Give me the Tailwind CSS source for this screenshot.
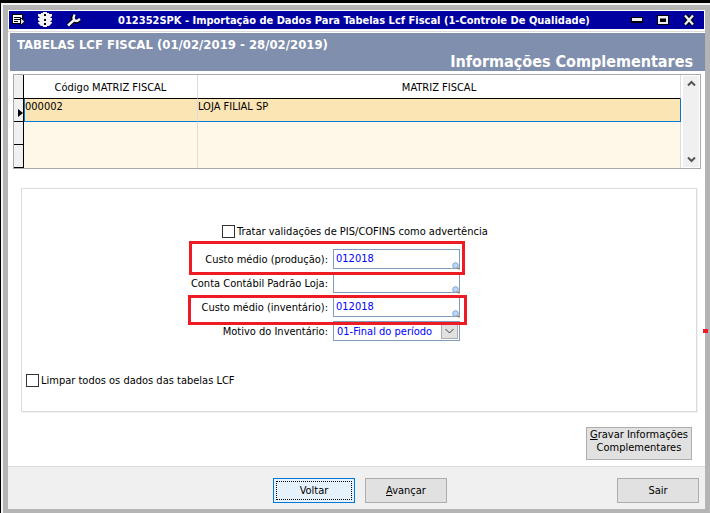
<!DOCTYPE html>
<html lang="pt-BR">
<head>
<meta charset="utf-8">
<meta name="viewport" content="width=device-width, initial-scale=1">
<title>Importação de Dados Para Tabelas Lcf Fiscal</title>
<script src="https://cdn.jsdelivr.net/npm/@tailwindcss/browser@4"></script>
</head>
<body class="bg-[#b4b4b4] font-['Tahoma','DejaVu_Sans_Condensed','Noto_Sans',sans-serif] text-[11px] leading-[13px] text-black">
<div class="relative flex min-h-screen flex-col border-t-3 border-l border-black">
  <div class="flex flex-1 flex-col border-t-2 border-l-2 border-[#f4f4f4]">
  <div class="flex flex-1 flex-col border-x-5 border-t-5 border-b-4 border-[#b4b4b4] bg-white">

    <header class="mt-px ml-px mr-px flex h-[18px] items-center bg-[#0000a0] text-white">
      <div class="flex w-[72px] shrink-0 items-center pl-[3px]">
        <button aria-label="Executar" class="block"><svg width="14" height="14" viewBox="0 0 14 14"><path d="M0 1h11v10H0z" fill="#000"/><path d="M1 2h9v8H1z" fill="#fff"/><path d="M2 4.500h6M2 6.500h6M2 8.500h4" stroke="#000"/><path d="M8.500 4.500v8l4.500-4z" fill="#ddd" stroke="#000"/></svg></button>
        <button aria-label="Semáforo" class="ml-3 block"><svg width="14" height="18" viewBox="0 0 14 18"><path d="M5 1h4v1h2v1h3v2l-2 2h2v2l-2 2h2v1l-3 3H9v1H5v-1H3l-3-3v-1h2L0 9V7h2L0 5V3h3V2h2z" fill="#f4f4f4"/><path d="M6 3h2v2H6zM6 8h2v2H6zM6 12h2v2H6z" fill="#000"/></svg></button>
        <button aria-label="Ferramentas" class="ml-3.5 block"><svg width="15" height="15" viewBox="0 0 15 15"><path d="M2.500 12 8 7M8.500 2 7 5l1 3 3 .5L14 7" fill="none" stroke="#000" stroke-width="4.400"/><path d="M2 12.500 8 7M8.500 1.500 7.500 5l1 2.500 2.500.5 3-2" fill="none" stroke="#f4f4f4" stroke-width="2.400"/></svg></button>
      </div>
      <h1 class="flex-1 text-center text-[11px] font-bold whitespace-nowrap">012352SPK - Importação de Dados Para Tabelas Lcf Fiscal (1-Controle De Qualidade)</h1>
      <div class="flex w-[77px] shrink-0 items-center gap-3.5 pl-1">
        <button aria-label="Minimizar"><svg class="block" width="12" height="12" viewBox="0 0 12 12"><path d="M0 3h12v6H0z" fill="#000"/><path d="M1 4h10v3H1z" fill="#eee"/></svg></button>
        <button aria-label="Maximizar"><svg class="block" width="12" height="12" viewBox="0 0 12 12"><path d="M0 1h12v10H0z" fill="#000"/><path d="M1 2h10v8H1zM3 4.500v3.500h6V4.500z" fill="#eee" fill-rule="evenodd"/></svg></button>
        <button aria-label="Fechar"><svg class="block" width="12" height="12" viewBox="0 0 12 12"><path d="m2 1.500 8 9M10 1.500l-8 9" stroke="#000" stroke-width="4.500"/><path d="m2 1.500 8 9M10 1.500l-8 9" stroke="#eee" stroke-width="2.400"/></svg></button>
      </div>
    </header>

    <div class="mt-0.5 border-t border-[#dcdcdc]"></div>

    <section class="mt-px ml-0.5 flex h-[38px] flex-col justify-between bg-[#808fad] pt-1 pr-3 pl-[7px] font-bold text-white">
      <p class="text-[13px] leading-4">TABELAS LCF FISCAL (01/02/2019 - 28/02/2019)</p>
      <h2 class="text-right text-[16px] leading-[18px]">Informações Complementares</h2>
    </section>

    <main class="flex flex-1 flex-col">
      <div class="mt-[3px] mr-1 ml-[5px] flex border border-[#a9a9a9]">
        <table class="flex-1 table-fixed border-separate border-spacing-0">
          <colgroup><col class="w-2.5"><col class="w-[174px]"><col></colgroup>
          <thead>
            <tr class="h-6">
              <td class="border-r border-b border-black bg-[#f0f0f0] p-0"></td>
              <th scope="col" class="border-r border-b border-r-[#dcdcdc] border-b-black p-0 pt-px font-normal">Código MATRIZ FISCAL</th>
              <th scope="col" class="border-r border-b border-r-[#dcdcdc] border-b-black p-0 pt-px font-normal">MATRIZ FISCAL</th>
            </tr>
          </thead>
          <tbody class="bg-[#fff8e8]">
            <tr class="h-[23px] bg-[#fce5b4]">
              <td class="border-r border-b border-black bg-[#f0f0f0] p-0 align-bottom"><svg class="mb-1 ml-1" width="5" height="8" viewBox="0 0 5 8"><path d="M0 0v8l5-4z"/></svg></td>
              <td class="border-r border-b border-l border-r-[#dcdcdc] border-b-[#0078d7] border-l-[#0078d7] p-0 pt-px align-top">000002</td>
              <td class="border-r border-b border-[#0078d7] p-0 pt-px align-top">LOJA FILIAL SP</td>
            </tr>
            <tr class="h-[23px]">
              <td class="border-r border-b border-black bg-[#f0f0f0] p-0"></td>
              <td class="border-r border-[#dcdcdc] p-0"></td>
              <td class="border-r border-[#dcdcdc] p-0"></td>
            </tr>
            <tr class="h-[23px]">
              <td class="border-r border-b border-black bg-[#f0f0f0] p-0"></td>
              <td class="border-r border-[#dcdcdc] p-0"></td>
              <td class="border-r border-[#dcdcdc] p-0"></td>
            </tr>
          </tbody>
        </table>
        <div class="my-px mr-px ml-0.5 flex w-4 flex-col items-center justify-between bg-[#f0f0f0] py-1">
          <button aria-label="Rolar para cima"><svg class="block" width="9" height="7" viewBox="0 0 9 7"><path d="M1 5.500 4.500 2 8 5.500" fill="none" stroke="#555" stroke-width="2"/></svg></button>
          <button aria-label="Rolar para baixo"><svg class="block" width="9" height="7" viewBox="0 0 9 7"><path d="M1 1.500 4.500 5 8 1.500" fill="none" stroke="#555" stroke-width="2"/></svg></button>
        </div>
      </div>

      <form class="mt-[19px] mr-2 ml-[13px] border border-[#dcdcdc] pt-9 pb-6 shadow-[1px_1px_0_#f0f0f0]">
        <label class="ml-[200px] flex items-center gap-0.5"><input type="checkbox" class="size-[13px] appearance-none border border-[#333] bg-white">Tratar validações de PIS/COFINS como advertência</label>
        <div class="relative mt-[11px] ml-[166px] grid w-[272px] grid-cols-[140px_127px] items-center gap-x-[5px] gap-y-1">
          <label for="prod" class="text-right">Custo médio (produção):</label>
          <div class="relative"><input id="prod" value="012018" class="block h-5 w-full border border-[#7f9db9] pb-0.5 pl-0.5 text-[#0000ff]">
            <svg class="absolute right-0 -bottom-px" width="8" height="8" viewBox="0 0 8 8"><path d="m5 5 2.500 2.500" stroke="#b97a3c" stroke-width="1.500"/><circle cx="3.500" cy="3.500" r="2.800" fill="#bcd8f4" stroke="#7fa4cf"/></svg></div>
          <label for="conta" class="text-right whitespace-nowrap">Conta Contábil Padrão Loja:</label>
          <div class="relative"><input id="conta" value="" class="block h-5 w-full border border-[#7f9db9] pb-0.5 pl-0.5 text-[#0000ff]">
            <svg class="absolute right-0 -bottom-px" width="8" height="8" viewBox="0 0 8 8"><path d="m5 5 2.500 2.500" stroke="#b97a3c" stroke-width="1.500"/><circle cx="3.500" cy="3.500" r="2.800" fill="#bcd8f4" stroke="#7fa4cf"/></svg></div>
          <label for="inv" class="text-right">Custo médio (inventário):</label>
          <div class="relative"><input id="inv" value="012018" class="block h-5 w-full border border-[#7f9db9] pb-0.5 pl-0.5 text-[#0000ff]">
            <svg class="absolute right-0 -bottom-px" width="8" height="8" viewBox="0 0 8 8"><path d="m5 5 2.500 2.500" stroke="#b97a3c" stroke-width="1.500"/><circle cx="3.500" cy="3.500" r="2.800" fill="#bcd8f4" stroke="#7fa4cf"/></svg></div>
          <label for="motivo" class="text-right">Motivo do Inventário:</label>
          <div class="relative"><select id="motivo" class="block h-5 w-full appearance-none border border-[#7f9db9] pl-[3px] text-[#0000ff]"><option>01-Final do período</option></select>
            <span class="pointer-events-none absolute top-0.5 right-0.5 flex h-4 w-[17px] items-center justify-center border border-[#adadad] bg-[#e1e1e1]"><svg width="9" height="6" viewBox="0 0 9 6"><path d="m.5 1 4 4 4-4" fill="none" stroke="#444"/></svg></span></div>
          <div class="pointer-events-none absolute -top-2 left-px h-[34px] w-[276px] border-3 border-[#ed1c24]"></div>
          <div class="pointer-events-none absolute top-[46px] left-0 h-[30px] w-[279px] border-3 border-[#ed1c24]"></div>
        </div>
        <label class="mt-[33px] ml-1 flex items-center gap-0.5"><input type="checkbox" class="size-[13px] appearance-none border border-[#333] bg-white">Limpar todos os dados das tabelas LCF</label>
      </form>

      <div class="mt-[15px] mr-[13px] flex justify-end">
        <button class="h-[33px] w-[106px] border border-[#adadad] bg-[#e1e1e1] pb-[5px] whitespace-nowrap"><u>G</u>ravar Informações<br>Complementares</button>
      </div>
    </main>

    <footer class="flex h-[43px] items-start gap-2.5 border-t border-[#dcdcdc] bg-[#f0f0f0] pt-[11px] pr-1.5 pl-[265px]">
      <button class="h-[25px] w-[82px] border border-[#0078d7] bg-[#e5f1fb] p-0.5"><span class="flex h-full items-center justify-center border border-dotted border-black">Voltar</span></button>
      <button class="h-[25px] w-[82px] border border-[#adadad] bg-[#e1e1e1]"><u>A</u>vançar</button>
      <button class="ml-auto h-[25px] w-[82px] border border-[#adadad] bg-[#e1e1e1]">Sair</button>
    </footer>
  </div>
  </div>
  <div class="absolute top-[326px] right-0.5 h-1 w-[5px] bg-[#ed1c24]"></div>
</div>
</body>
</html>
